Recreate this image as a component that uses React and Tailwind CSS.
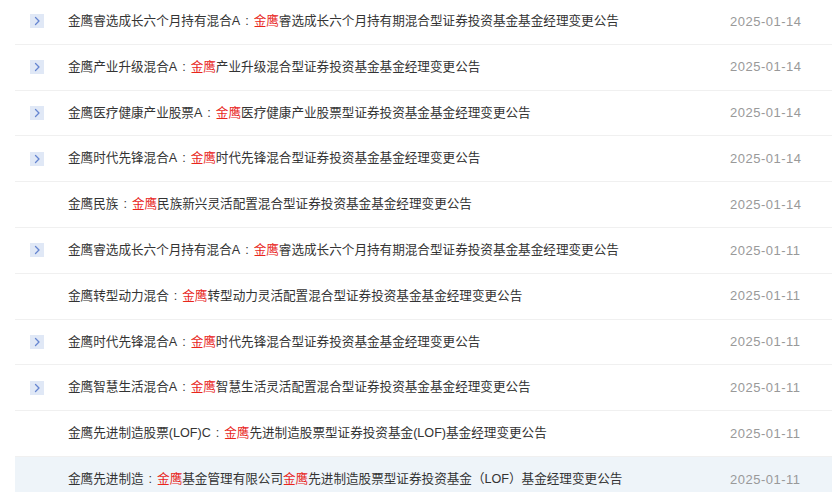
import React from 'react';

const rows = [
  { icon: true, fund: '金鹰睿选成长六个月持有混合A', parts: [['金鹰', true], ['睿选成长六个月持有期混合型证券投资基金基金经理变更公告']], date: '2025-01-14' },
  { icon: true, fund: '金鹰产业升级混合A', parts: [['金鹰', true], ['产业升级混合型证券投资基金基金经理变更公告']], date: '2025-01-14' },
  { icon: true, fund: '金鹰医疗健康产业股票A', parts: [['金鹰', true], ['医疗健康产业股票型证券投资基金基金经理变更公告']], date: '2025-01-14' },
  { icon: true, fund: '金鹰时代先锋混合A', parts: [['金鹰', true], ['时代先锋混合型证券投资基金基金经理变更公告']], date: '2025-01-14' },
  { icon: false, fund: '金鹰民族', parts: [['金鹰', true], ['民族新兴灵活配置混合型证券投资基金基金经理变更公告']], date: '2025-01-14' },
  { icon: true, fund: '金鹰睿选成长六个月持有混合A', parts: [['金鹰', true], ['睿选成长六个月持有期混合型证券投资基金基金经理变更公告']], date: '2025-01-11' },
  { icon: false, fund: '金鹰转型动力混合', parts: [['金鹰', true], ['转型动力灵活配置混合型证券投资基金基金经理变更公告']], date: '2025-01-11' },
  { icon: true, fund: '金鹰时代先锋混合A', parts: [['金鹰', true], ['时代先锋混合型证券投资基金基金经理变更公告']], date: '2025-01-11' },
  { icon: true, fund: '金鹰智慧生活混合A', parts: [['金鹰', true], ['智慧生活灵活配置混合型证券投资基金基金经理变更公告']], date: '2025-01-11' },
  { icon: false, fund: '金鹰先进制造股票(LOF)C', parts: [['金鹰', true], ['先进制造股票型证券投资基金(LOF)基金经理变更公告']], date: '2025-01-11' },
  { icon: false, fund: '金鹰先进制造', parts: [['金鹰', true], ['基金管理有限公司'], ['金鹰', true], ['先进制造股票型证券投资基金（LOF）基金经理变更公告']], date: '2025-01-11', active: true },
];

const Chevron = () => (
  <span className="flex h-[14px] w-[14px] items-center justify-center bg-[#e0e8f6]">
    <svg width="8" height="10" viewBox="0 0 8 10" fill="none">
      <path d="M2.5 1.5 L6 5 L2.5 8.5" stroke="#6585d0" strokeWidth="1.3" strokeLinecap="round" strokeLinejoin="round" />
    </svg>
  </span>
);

export default function App() {
  return (
    <div
      className="h-[492px] w-[832px] overflow-hidden bg-white pl-[15px]"
      style={{ fontFamily: '"Liberation Sans", "Noto Sans CJK SC", sans-serif' }}
    >
      <div className="-mt-[1px]">
        {rows.map((r, i) => (
          <div
            key={i}
            className={`flex h-[45.8px] items-center border-b border-[#f0f0f0] text-[12.6px] ${r.active ? 'bg-[#eef4f9]' : ''}`}
          >
            <div className="ml-[15px] w-[38px] shrink-0">{r.icon && <Chevron />}</div>
            <div className="flex-1 whitespace-nowrap text-[#333]">
              {r.fund}
              <span className="mx-[5px]">:</span>
              {r.parts.map(([t, red], j) => (
                <span key={j} className={red ? 'text-[#e8261c]' : ''}>{t}</span>
              ))}
            </div>
            <div className="w-[102px] shrink-0 text-[13px] tracking-[0.5px] text-[#999]">{r.date}</div>
          </div>
        ))}
      </div>
    </div>
  );
}
